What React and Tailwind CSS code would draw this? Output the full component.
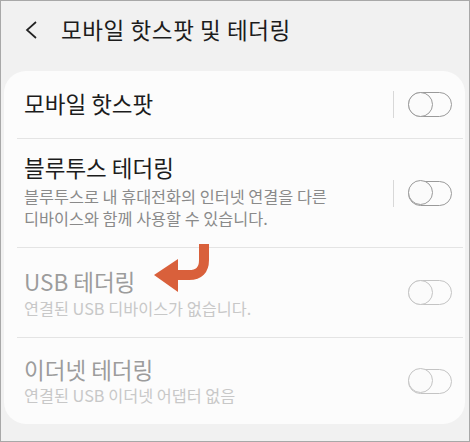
import React from "react";

const font = { fontFamily: '"Noto Sans CJK KR", "Noto Sans", sans-serif' };

function Toggle({ disabled }) {
  const c = disabled ? "border-[#c4c4c4]" : "border-[#9a9a9a]";
  return (
    <div className={`relative w-[44px] h-[25px] rounded-full border-[1.5px] ${c}`}>
      <div className={`absolute left-[-1.5px] top-[-1.5px] w-[25px] h-[25px] rounded-full border-[1.5px] ${c} bg-[#fbfbfb]`} />
    </div>
  );
}

function Divider() {
  return <div className="ml-[13px] mr-[2px] h-px bg-[#e4e4e4]" />;
}

export default function App() {
  return (
    <div style={font} className="w-[470px] h-[442px] bg-[#f1f1f1] border border-[#a8a8a8] flex flex-col overflow-hidden">
      <div className="h-[70px] flex items-center pl-[24px] pb-[12px]">
        <svg width="14" height="18" viewBox="0 0 14 18" className="mr-[22px]">
          <polyline points="11,1 2,9 11,17" fill="none" stroke="#222" strokeWidth="1.7" />
        </svg>
        <span className="text-[22.5px] text-[#1c1c1c] tracking-[0.6px]">모바일 핫스팟 및 테더링</span>
      </div>
      <div className="relative ml-[3px] mr-[4px] bg-[#fcfcfc] rounded-[22px] flex flex-col">
        <div className="h-[67px] flex items-center pl-[20px] pr-[13px]">
          <div className="flex-1 text-[22.5px] text-[#1c1c1c] pb-[2px]">모바일 핫스팟</div>
          <div className="w-px h-[27px] bg-[#d8d8d8] mr-[14px]" />
          <Toggle />
        </div>
        <Divider />
        <div className="h-[108px] flex items-center pl-[20px] pr-[13px]">
          <div className="flex-1 flex flex-col pb-[4px]">
            <div className="text-[22.5px] leading-[28px] text-[#1c1c1c]">블루투스 테더링</div>
            <div className="mt-[4px] text-[16.3px] leading-[22px] text-[#8a8a8a]">
              블루투스로 내 휴대전화의 인터넷 연결을 다른
              <br />
              디바이스와 함께 사용할 수 있습니다.
            </div>
          </div>
          <div className="w-px h-[27px] bg-[#d8d8d8] mr-[14px]" />
          <Toggle />
        </div>
        <Divider />
        <div className="h-[89px] flex items-center pl-[20px] pr-[13px]">
          <div className="flex-1 flex flex-col">
            <div className="text-[22.5px] leading-[28px] text-[#9c9c9c]">USB 테더링</div>
            <div className="mt-[2px] text-[16.3px] leading-[22px] text-[#c8c8c8]">연결된 USB 디바이스가 없습니다.</div>
          </div>
          <div className="w-px h-[27px] mr-[14px]" />
          <Toggle disabled />
        </div>
        <Divider />
        <div className="h-[86px] flex items-center pl-[20px] pr-[13px]">
          <div className="flex-1 flex flex-col pb-[2px]">
            <div className="text-[22.5px] leading-[28px] text-[#9c9c9c]">이더넷 테더링</div>
            <div className="mt-[1px] text-[16.3px] leading-[22px] text-[#c8c8c8]">연결된 USB 이더넷 어댑터 없음</div>
          </div>
          <div className="w-px h-[27px] mr-[14px]" />
          <Toggle disabled />
        </div>
        <svg className="absolute left-[145px] top-[173px]" width="70" height="54" viewBox="0 0 70 54">
          <path d="M55 0 V16 Q55 31 40 31 H24" fill="none" stroke="#d9603b" strokeWidth="10" />
          <polygon points="5,31 29,15 29,48" fill="#d9603b" />
        </svg>
      </div>
    </div>
  );
}
